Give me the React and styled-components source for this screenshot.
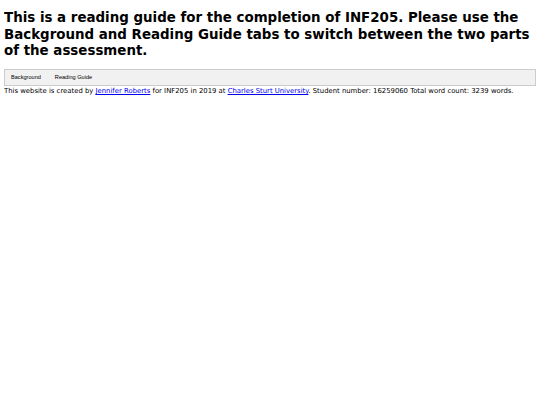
import { useState } from "react";
import styled, { createGlobalStyle } from "styled-components";

const GlobalStyle = createGlobalStyle`
  body {
    margin: 4px;
    font-family: "DejaVu Sans", Verdana, sans-serif;
    background: #fff;
    color: #000;
  }
`;

function App() {
  const [tab, setTab] = useState("");
  return (
    <>
      <GlobalStyle />
      <Heading>
        This is a reading guide for the completion of INF205. Please use the
        Background and Reading Guide tabs to switch between the two parts of
        the assessment.
      </Heading>
      <TabBar>
        <TabButton $active={tab === "bg"} onClick={() => setTab("bg")}>
          Background
        </TabButton>
        <TabButton $active={tab === "rg"} onClick={() => setTab("rg")}>
          Reading Guide
        </TabButton>
      </TabBar>
      <Footer>
        This website is created by <a href="#">Jennifer Roberts</a> for INF205
        in 2019 at <a href="#">Charles Sturt University</a>. Student number:
        16259060 Total word count: 3239 words.
      </Footer>
    </>
  );
}

const Heading = styled.h1`
  font-size: 13.4px;
  line-height: 16.5px;
  font-weight: bold;
  margin: 6px 0 9px;
`;

const TabBar = styled.div`
  display: flex;
  overflow: hidden;
  border: 1px solid #ccc;
  background-color: #f1f1f1;
`;

const TabButton = styled.button`
  background-color: ${(p) => (p.$active ? "#ccc" : "inherit")};
  border: none;
  outline: none;
  cursor: pointer;
  padding: 4.5px 7px;
  font-family: "Liberation Sans", Arial, sans-serif;
  font-size: 5.6px;
  line-height: 6.5px;
  color: #000;

  &:first-child {
    padding-left: 6px;
  }

  &:hover {
    background-color: #ddd;
  }
`;

const Footer = styled.p`
  margin: 1px 0 0;
  font-size: 6.86px;
  line-height: 9px;

  a {
    color: #0000ee;
  }
`;

export default App;
